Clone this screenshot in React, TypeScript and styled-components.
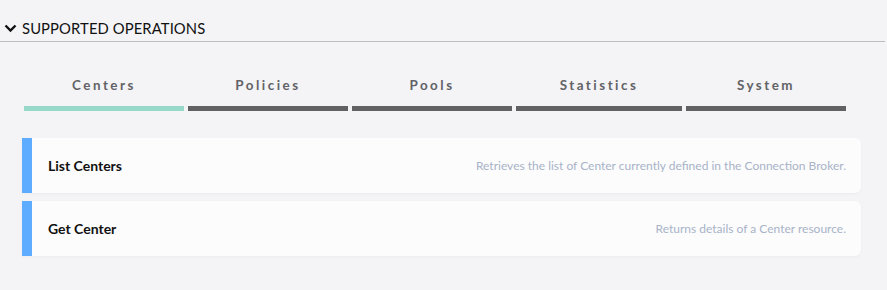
import React from "react";
import styled, { createGlobalStyle } from "styled-components";

const GlobalStyle = createGlobalStyle`
  html, body {
    margin: 0;
    padding: 0;
    background: #f4f4f6;
    font-family: Lato, "Open Sans", sans-serif;
  }
`;

const tabs = [
  { label: "Centers", width: 160, active: true },
  { label: "Policies", width: 160 },
  { label: "Pools", width: 160 },
  { label: "Statistics", width: 166 },
  { label: "System", width: 160 },
];

const operations = [
  {
    name: "List Centers",
    desc: "Retrieves the list of Center currently defined in the Connection Broker.",
  },
  { name: "Get Center", desc: "Returns details of a Center resource." },
];

const Chevron = () => (
  <svg width="13" height="9" viewBox="0 0 13 9">
    <path d="M1.5 1.5 L6.5 6.5 L11.5 1.5" fill="none" stroke="#111" strokeWidth="2.4" />
  </svg>
);

const App = () => {
  return (
    <Page>
      <GlobalStyle />
      <Header>
        <Chevron />
        <HeaderText>SUPPORTED OPERATIONS</HeaderText>
      </Header>
      <TabRow>
        {tabs.map((t) => (
          <Tab key={t.label} $width={t.width} $active={!!t.active}>
            {t.label}
          </Tab>
        ))}
      </TabRow>
      <CardList>
        {operations.map((op) => (
          <Card key={op.name}>
            <OpName>{op.name}</OpName>
            <OpDesc>{op.desc}</OpDesc>
          </Card>
        ))}
      </CardList>
    </Page>
  );
};

export default App;

const Page = styled.div`
  width: 887px;
  height: 290px;
  padding-top: 15px;
  box-sizing: border-box;
`;

const Header = styled.div`
  display: flex;
  align-items: center;
  gap: 5px;
  height: 27px;
  width: 885px;
  padding-left: 4px;
  box-sizing: border-box;
  border-bottom: 1px solid #bdbdc0;
`;

const HeaderText = styled.div`
  font-size: 14.8px;
  color: #111;
  letter-spacing: 0.1px;
`;

const TabRow = styled.div`
  display: flex;
  gap: 4px;
  padding-left: 24px;
  margin-top: 35px;
`;

const Tab = styled.div<{ $width: number; $active: boolean }>`
  width: ${({ $width }) => $width}px;
  text-align: center;
  font-size: 13.4px;
  font-weight: 700;
  letter-spacing: 2.5px;
  color: #626266;
  padding-bottom: 13px;
  border-bottom: 5px solid ${({ $active }) => ($active ? "#96d9c9" : "#616163")};
`;

const CardList = styled.div`
  display: flex;
  flex-direction: column;
  gap: 8px;
  margin: 27px 0 0 22px;
  width: 839px;
`;

const Card = styled.div`
  display: flex;
  align-items: center;
  justify-content: space-between;
  height: 55px;
  background: #fcfcfd;
  border-left: 10px solid #5eacff;
  border-radius: 0 6px 6px 0;
  box-shadow: 0 1px 3px rgba(0, 0, 0, 0.04);
  padding: 0 15px 0 16px;
  box-sizing: border-box;
`;

const OpName = styled.div`
  font-size: 14px;
  font-weight: 700;
  color: #111;
`;

const OpDesc = styled.div`
  font-size: 12px;
  color: #a8b3c7;
`;
